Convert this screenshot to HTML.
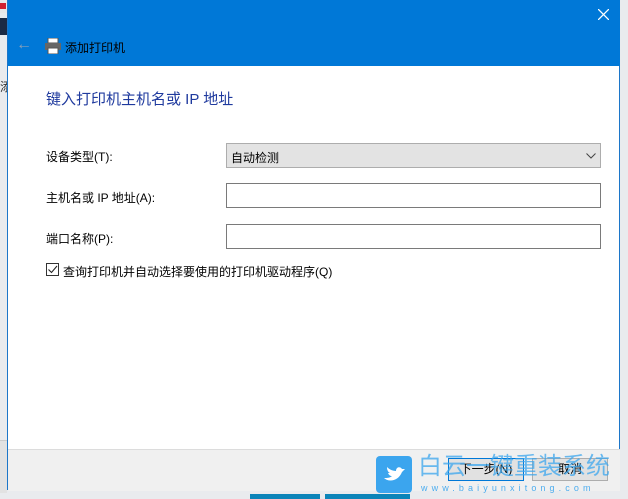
<!DOCTYPE html>
<html><head><meta charset="utf-8"><style>
body{margin:0;width:628px;height:499px;overflow:hidden;background:#e9ebee;position:relative;font-family:"Liberation Sans","Noto Sans CJK SC",sans-serif;font-size:12px;color:#000}
.abs{position:absolute}
.win{left:7px;top:0;width:613px;height:490px;background:#fff;border:1px solid #1c76c9;border-top:none;box-sizing:border-box}
.tb{left:0;top:0;width:612px;height:66px;background:#0078d7}
.inp{background:#fff;border:1px solid #7a7a7a;height:25px;box-sizing:border-box}
</style></head><body>
<div class="abs" style="left:0;top:0;width:7px;height:13px;background:#e8e8e8"></div>
<div class="abs" style="left:0;top:3px;width:6px;height:6px;background:#d02030"></div>
<div class="abs" style="left:0;top:18px;width:7px;height:17px;background:#1b2a44"></div>
<div class="abs" style="left:0;top:78px;font-size:12px;color:#333">添</div>
<div class="abs" style="left:0;top:440px;width:7px;height:52px;background:#e2e2e2;border-top:1px solid #ccc"></div>
<div class="abs" style="left:250px;top:494px;width:70px;height:5px;background:#0b84b9"></div>
<div class="abs" style="left:325px;top:494px;width:85px;height:5px;background:#0b84b9"></div>
<div class="win abs">
 <div class="tb abs"></div>
 <div class="abs" style="left:8px;top:36px;color:#8aa0b8;font-size:16px">&#8592;</div>
 <svg class="abs" style="left:36px;top:38px" width="18" height="16" viewBox="0 0 18 16"><rect x="4" y="0" width="10" height="5" fill="#fff" stroke="#555"/><rect x="1" y="5" width="16" height="7" fill="#666"/><rect x="4" y="10" width="10" height="6" fill="#fff" stroke="#555"/></svg>
 <div class="abs" style="left:57px;top:39px;font-size:12px;color:#000">添加打印机</div>
 <svg class="abs" style="left:590px;top:9px" width="11" height="11"><path d="M0 0L11 11M11 0L0 11" stroke="#fff" stroke-width="1.3"/></svg>
 <div class="abs" style="left:38px;top:88px;font-size:15px;color:#1f3a9e">键入打印机主机名或 IP 地址</div>
 <div class="abs" style="left:38px;top:148px">设备类型(T):</div>
 <div class="abs" style="left:38px;top:189px">主机名或 IP 地址(A):</div>
 <div class="abs" style="left:38px;top:230px">端口名称(P):</div>
 <div class="abs inp" style="left:218px;top:143px;width:375px;background:#e3e3e3;border-color:#adadad"><span class="abs" style="left:4px;top:5px">自动检测</span><svg class="abs" style="left:359px;top:9px" width="10" height="6"><path d="M0.5 0.5L5 5L9.5 0.5" stroke="#444" fill="none"/></svg></div>
 <div class="abs inp" style="left:218px;top:183px;width:375px"></div>
 <div class="abs inp" style="left:218px;top:224px;width:375px"></div>
 <div class="abs" style="left:38px;top:263px;width:13px;height:13px;border:1px solid #333;box-sizing:border-box"><svg width="11" height="11" style="position:absolute;left:0;top:0"><path d="M1.5 5.5L4.5 8.5L10 2" stroke="#222" fill="none" stroke-width="1.1"/></svg></div>
 <div class="abs" style="left:55px;top:263px">查询打印机并自动选择要使用的打印机驱动程序(Q)</div>
 <div class="abs" style="left:0;top:449px;width:612px;height:41px;background:#f0f0f0;border-top:1px solid #dcdcdc"></div>
 <div class="abs" style="left:440px;top:458px;width:76px;height:23px;border:1px solid #0078d7;background:#e1e1e1;box-sizing:border-box;text-align:center;line-height:21px">下一步(N)</div>
 <div class="abs" style="left:524px;top:458px;width:76px;height:23px;border:1px solid #adadad;background:#e1e1e1;box-sizing:border-box;text-align:center;line-height:21px">取消</div>
</div>
<div class="abs" style="left:376px;top:456px;width:36px;height:37px;background:#3ba5ee;border-radius:4px"><svg width="36" height="37"><path d="M8 22c4 4 14 4 18-6l3-3-3 0c-2-3-6-2-6 2-4 0-7-2-9-4 0 3 1 5 3 6l-2 0c1 2 2 3 4 3-2 2-5 2-8 2z" fill="#fff"/></svg></div>
<div class="abs" style="left:418px;top:453px;font-size:24px;line-height:28px;color:rgba(59,165,238,.75);white-space:nowrap">白云一键重装系统</div>
<div class="abs" style="left:421px;top:483px;font-size:9px;line-height:10px;color:rgba(59,165,238,.9);letter-spacing:4.1px;white-space:nowrap">www.baiyunxitong.com</div>
</body></html>
